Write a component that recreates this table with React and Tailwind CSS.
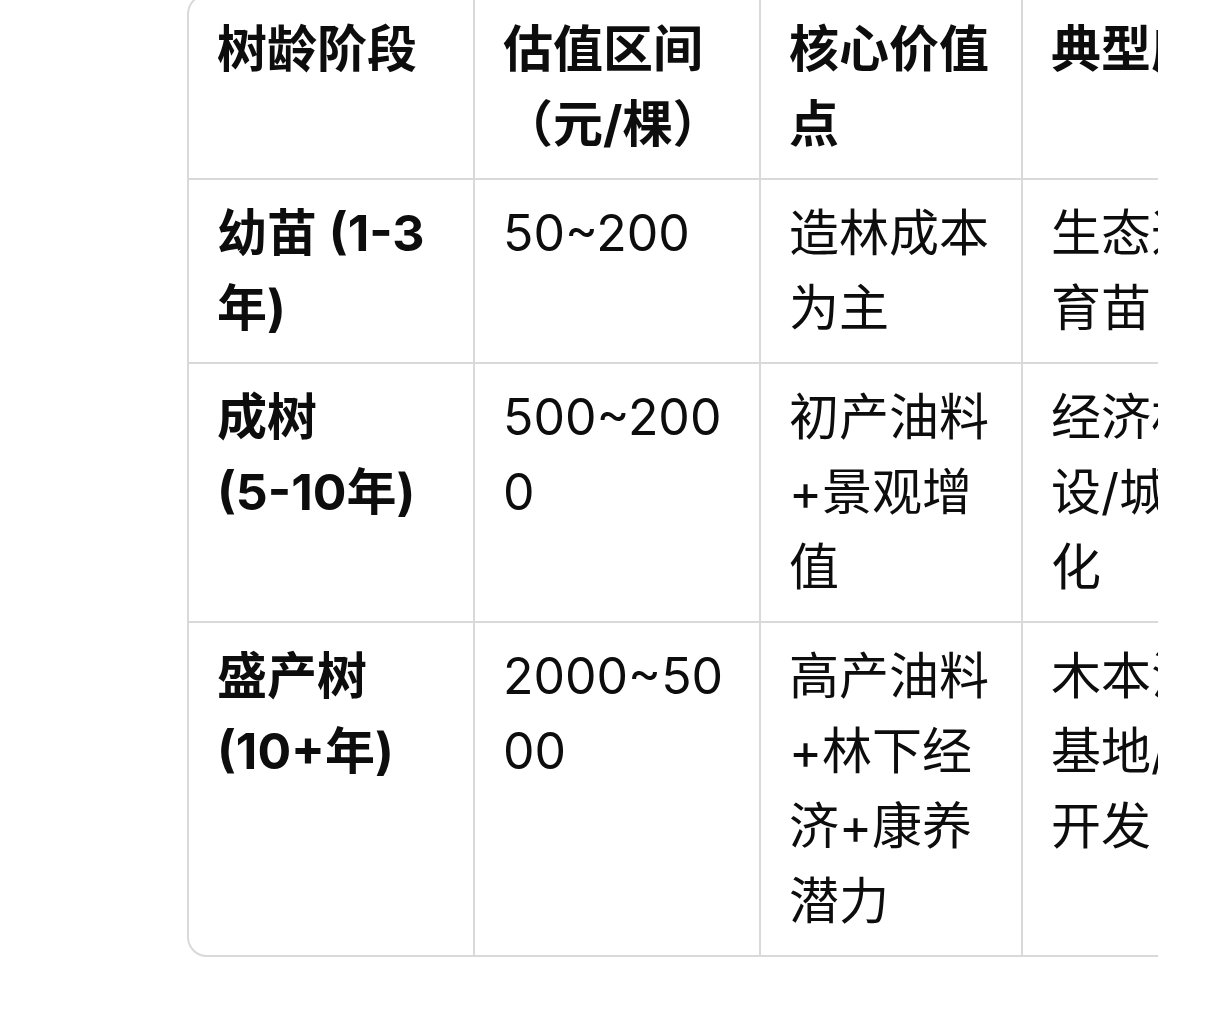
import React from "react";

const headers = ["树龄阶段", "估值区间（元/棵）", "核心价值点", "典型应用"];

// first column: keep the bracketed age together the way the original wraps
const Age = ({ name, age, tail }) => (
  <>
    {name} <span className="whitespace-nowrap">{age}</span>
    {tail}
  </>
);

const rows = [
  [<Age name="幼苗" age="(1-3" tail="年)" />, "50~200", "造林成本为主", "生态造林/育苗"],
  [<Age name="成树" age="(5-10年)" />, "500~2000", "初产油料+景观增值", "经济林建设/城市绿化"],
  [<Age name="盛产树" age="(10+年)" />, "2000~5000", "高产油料+林下经济+康养潜力", "木本油料基地/康养开发"],
];

const colWidths = ["w-[286px]", "w-[286px]", "w-[262px]", "w-[286px]"];

const App = () => {
  return (
    <div className="min-h-screen bg-white overflow-hidden font-['Inter','Noto_Sans_CJK_SC',sans-serif] text-[#0d0d0d]">
      {/* horizontally scrolled table, clipped on the right */}
      <div className="-mt-[6px] ml-[187px] w-[971px] overflow-hidden">
        <div className="w-max rounded-[20px] border-2 border-[#d9d9d9] overflow-hidden">
          <table className="w-[1120px] table-fixed border-separate border-spacing-0 text-[50px] leading-[75px] [overflow-wrap:anywhere]">
            <colgroup>
              {colWidths.map((w, i) => (
                <col key={i} className={w} />
              ))}
            </colgroup>
            <thead>
              <tr>
                {headers.map((h, i) => (
                  <th
                    key={i}
                    className={`px-[28px] py-4 text-left align-top font-bold border-b-2 border-[#d9d9d9] ${
                      i < headers.length - 1 ? "border-r-2" : ""
                    }`}
                  >
                    {h}
                  </th>
                ))}
              </tr>
            </thead>
            <tbody>
              {rows.map((row, r) => (
                <tr key={r}>
                  {row.map((cell, i) => (
                    <td
                      key={i}
                      className={`px-[28px] py-4 align-top border-[#d9d9d9] ${
                        i === 0 ? "font-bold" : "font-normal"
                      } ${i < row.length - 1 ? "border-r-2" : ""} ${
                        r < rows.length - 1 ? "border-b-2" : ""
                      }`}
                    >
                      {cell}
                    </td>
                  ))}
                </tr>
              ))}
            </tbody>
          </table>
        </div>
      </div>
    </div>
  );
};

export default App;
